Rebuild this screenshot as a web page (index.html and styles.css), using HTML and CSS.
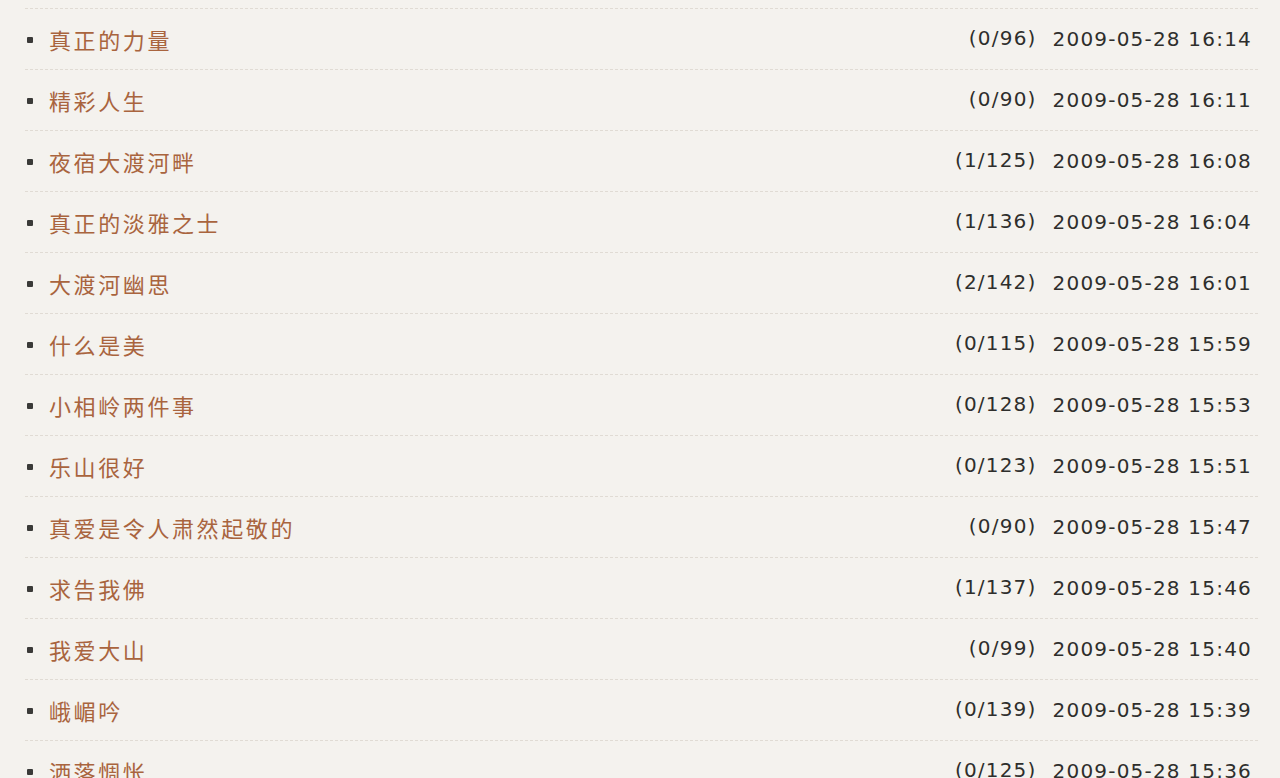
FILE: index.html
```html
<!DOCTYPE html>
<html lang="zh-CN">
<head>
<meta charset="utf-8">
<title>文章列表</title>
<link rel="stylesheet" href="styles.css">
</head>
<body>
<ul class="list">
  <li class="row"><span class="dot"></span><a class="title" href="#">真正的力量</a><span class="count">(0/96)</span><span class="date">2009-05-28 16:14</span></li>
  <li class="row"><span class="dot"></span><a class="title" href="#">精彩人生</a><span class="count">(0/90)</span><span class="date">2009-05-28 16:11</span></li>
  <li class="row"><span class="dot"></span><a class="title" href="#">夜宿大渡河畔</a><span class="count">(1/125)</span><span class="date">2009-05-28 16:08</span></li>
  <li class="row"><span class="dot"></span><a class="title" href="#">真正的淡雅之士</a><span class="count">(1/136)</span><span class="date">2009-05-28 16:04</span></li>
  <li class="row"><span class="dot"></span><a class="title" href="#">大渡河幽思</a><span class="count">(2/142)</span><span class="date">2009-05-28 16:01</span></li>
  <li class="row"><span class="dot"></span><a class="title" href="#">什么是美</a><span class="count">(0/115)</span><span class="date">2009-05-28 15:59</span></li>
  <li class="row"><span class="dot"></span><a class="title" href="#">小相岭两件事</a><span class="count">(0/128)</span><span class="date">2009-05-28 15:53</span></li>
  <li class="row"><span class="dot"></span><a class="title" href="#">乐山很好</a><span class="count">(0/123)</span><span class="date">2009-05-28 15:51</span></li>
  <li class="row"><span class="dot"></span><a class="title" href="#">真爱是令人肃然起敬的</a><span class="count">(0/90)</span><span class="date">2009-05-28 15:47</span></li>
  <li class="row"><span class="dot"></span><a class="title" href="#">求告我佛</a><span class="count">(1/137)</span><span class="date">2009-05-28 15:46</span></li>
  <li class="row"><span class="dot"></span><a class="title" href="#">我爱大山</a><span class="count">(0/99)</span><span class="date">2009-05-28 15:40</span></li>
  <li class="row"><span class="dot"></span><a class="title" href="#">峨嵋吟</a><span class="count">(0/139)</span><span class="date">2009-05-28 15:39</span></li>
  <li class="row"><span class="dot"></span><a class="title" href="#">洒落惆怅</a><span class="count">(0/125)</span><span class="date">2009-05-28 15:36</span></li>
</ul>
</body>
</html>
```

FILE: styles.css
```css
html, body {
  margin: 0;
  padding: 0;
  background: #f4f2ee;
  height: 100%;
  overflow: hidden;
}

.list {
  list-style: none;
  margin: 0 22px 0 25px;
  padding: 8px 0 0 0;
}

.row {
  display: flex;
  align-items: center;
  height: 60px;
  border-top: 1px dashed #e0dbd4;
  padding: 0 6px 0 2px;
}

.dot {
  width: 6px;
  height: 6px;
  border-radius: 1px;
  background: #3a3a38;
  flex: none;
  margin-right: 16px;
  margin-top: 1px;
}

.title {
  font-family: "Noto Sans CJK SC", "Noto Sans CJK TC", sans-serif;
  font-size: 22px;
  letter-spacing: 2.6px;
  color: #a9643e;
  text-decoration: none;
  flex: 1;
  line-height: 1;
}

.count,
.date {
  font-family: "DejaVu Sans", Verdana, sans-serif;
  font-size: 20px;
  letter-spacing: 1.2px;
  color: #2e2e2c;
  line-height: 1;
}

.count {
  margin-right: 16px;
  margin-top: -2px;
}
```
